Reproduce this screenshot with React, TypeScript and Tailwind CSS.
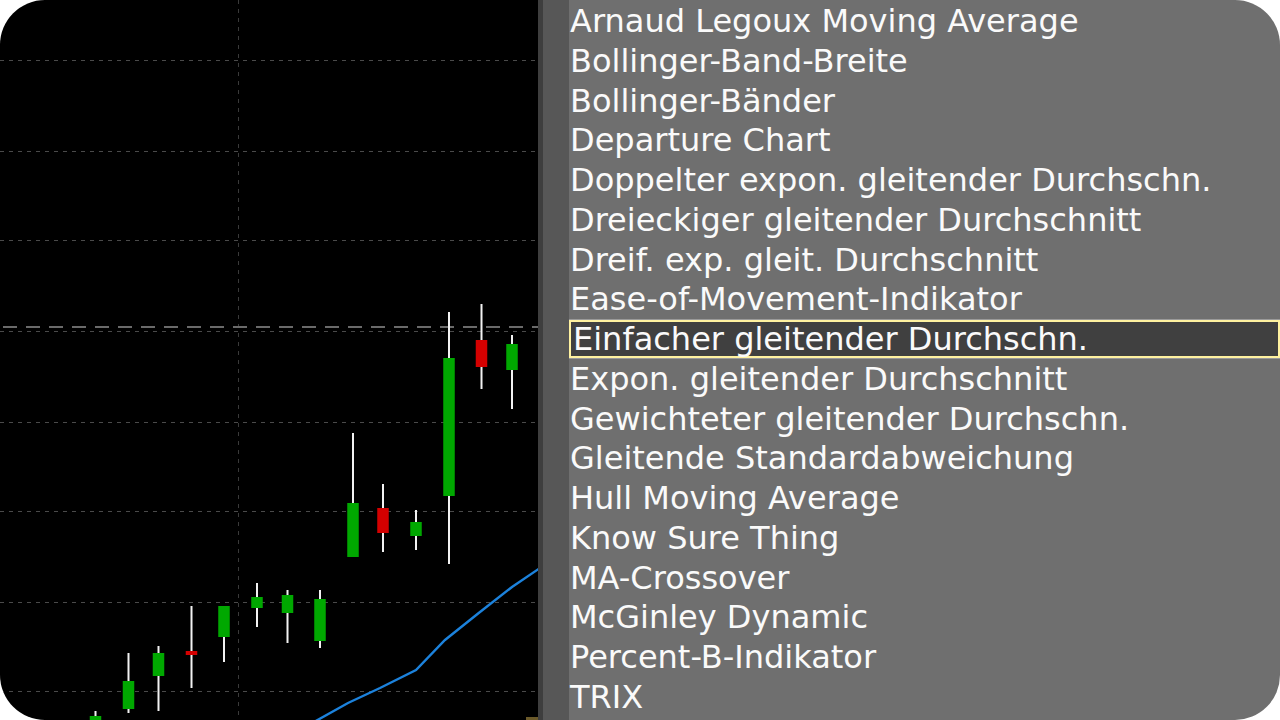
import React from "react";

const items = [
  "Alligator",
  "Arnaud Legoux Moving Average",
  "Bollinger-Band-Breite",
  "Bollinger-Bänder",
  "Departure Chart",
  "Doppelter expon. gleitender Durchschn.",
  "Dreieckiger gleitender Durchschnitt",
  "Dreif. exp. gleit. Durchschnitt",
  "Ease-of-Movement-Indikator",
  "Einfacher gleitender Durchschn.",
  "Expon. gleitender Durchschnitt",
  "Gewichteter gleitender Durchschn.",
  "Gleitende Standardabweichung",
  "Hull Moving Average",
  "Know Sure Thing",
  "MA-Crossover",
  "McGinley Dynamic",
  "Percent-B-Indikator",
  "TRIX",
];

type Candle = { cx: number; wt: number; wb: number; bt: number; bb: number; up: boolean };
const candles: Candle[] = [
  { cx: 95.5, wt: 711, wb: 722, bt: 716, bb: 722, up: true },
  { cx: 128.5, wt: 653, wb: 713, bt: 681, bb: 709, up: true },
  { cx: 158.5, wt: 646, wb: 711, bt: 653, bb: 676, up: true },
  { cx: 191.5, wt: 606, wb: 688, bt: 651, bb: 655, up: false },
  { cx: 224, wt: 606, wb: 662, bt: 606, bb: 637, up: true },
  { cx: 257, wt: 583, wb: 627, bt: 597, bb: 608, up: true },
  { cx: 287.5, wt: 590, wb: 643, bt: 595, bb: 613, up: true },
  { cx: 320, wt: 590, wb: 648, bt: 599, bb: 641, up: true },
  { cx: 353, wt: 433, wb: 557, bt: 503, bb: 557, up: true },
  { cx: 383, wt: 484, wb: 552, bt: 508, bb: 533, up: false },
  { cx: 416, wt: 510, wb: 550, bt: 522, bb: 536, up: true },
  { cx: 449, wt: 312, wb: 564, bt: 358, bb: 496, up: true },
  { cx: 481.5, wt: 304, wb: 389, bt: 340, bb: 367, up: false },
  { cx: 512, wt: 335, wb: 409, bt: 344, bb: 370, up: true },
];

const gridY = [60, 151, 240, 331, 422, 511, 602, 691];

function Chart() {
  return (
    <svg width="538" height="720" viewBox="0 0 538 720" className="block">
      <rect x="0" y="0" width="538" height="720" fill="#000" />
      {gridY.map((y) => (
        <line key={y} x1="0" x2="538" y1={y + 0.5} y2={y + 0.5} stroke="#4a4a4a" strokeWidth="1" strokeDasharray="4 5" />
      ))}
      <line x1="238.5" x2="238.5" y1="0" y2="720" stroke="#3a3a3a" strokeWidth="1" strokeDasharray="4 5" />
      <line x1="3" x2="538" y1="327" y2="327" stroke="#6a6a6a" strokeWidth="2" strokeDasharray="14 9" />
      <polyline
        points="314,722 348,703 380,688 416,670 445,640 480,612 512,587 540,568"
        fill="none"
        stroke="#1c82dc"
        strokeWidth="2.4"
      />
      {candles.map((c, i) => (
        <g key={i}>
          <rect x={c.cx - 1} y={c.wt} width="2" height={c.wb - c.wt} fill="#f2f2f2" />
          <rect x={c.cx - 5.75} y={c.bt} width="11.5" height={Math.max(c.bb - c.bt, 3)} fill={c.up ? "#00a800" : "#d40000"} />
        </g>
      ))}
      <rect x="526" y="717" width="12" height="3" fill="#6b5a2a" />
    </svg>
  );
}

export default function App() {
  return (
    <div className="w-[1280px] h-[720px] bg-white">
      <div className="w-[1280px] h-[720px] rounded-[45px] overflow-hidden flex flex-row">
        <div className="w-[538px] h-full shrink-0">
          <Chart />
        </div>
        <div className="w-[5px] h-full shrink-0 bg-[#3e3e3e]" />
        <div className="w-[26px] h-full shrink-0 bg-[#575757]" />
        <div className="flex-1 h-full bg-[#6f6f6f] overflow-hidden">
          <div
            className="flex flex-col mt-[-37.75px] text-[32px] text-[#fafafa]"
            style={{ fontFamily: '"DejaVu Sans", Verdana, sans-serif' }}
          >
            {items.map((t) =>
              t === "Einfacher gleitender Durchschn." ? (
                <div key={t} className="h-[39.75px] shrink-0">
                  <div className="h-[38px] box-border border-2 border-[#fff2a0] bg-[#404040] pl-[2px] leading-[34px] whitespace-nowrap outline outline-1 outline-[#9a9a9a]">
                    {t}
                  </div>
                </div>
              ) : (
                <div key={t} className="h-[39.75px] shrink-0 pl-[1px] leading-[39.75px] whitespace-nowrap">
                  {t}
                </div>
              )
            )}
          </div>
        </div>
      </div>
    </div>
  );
}
